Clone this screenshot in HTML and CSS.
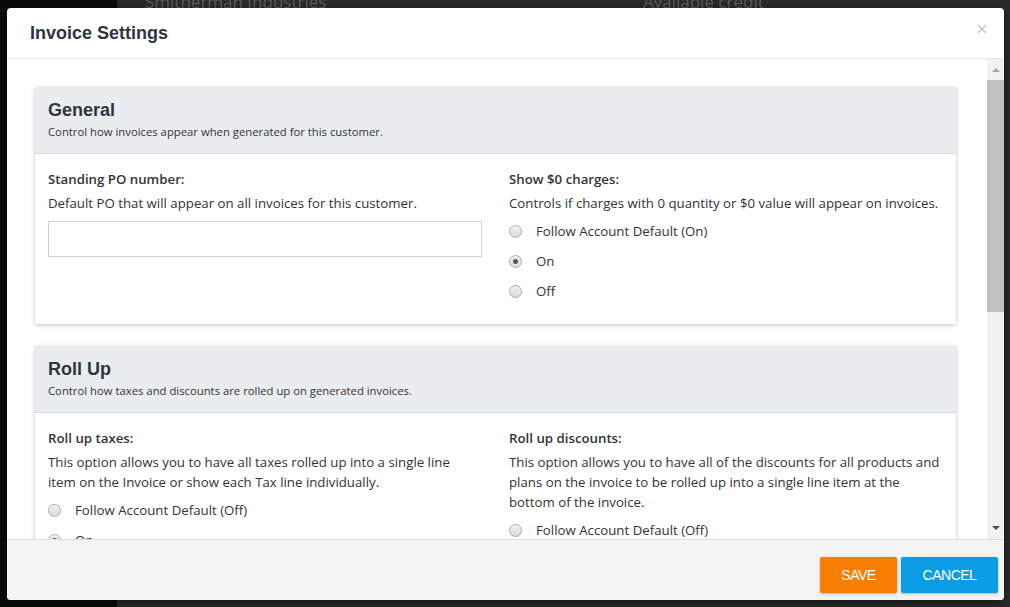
FILE: index.html
```html
<!DOCTYPE html>
<html lang="en">
<head>
    <meta charset="UTF-8">
    <meta name="viewport" content="width=device-width, initial-scale=1.0">
    <title>Invoice Settings</title>
    <link rel="stylesheet" href="styles.css">
</head>
<body>
    <div class="app">
        <aside class="sidebar"></aside>
        <main class="page">
            <div class="page-head">
                <span class="company">Smitherman Industries</span>
                <span class="credit">Available credit</span>
            </div>
        </main>
    </div>

    <div class="modal">
        <div class="modal-header">
            <h2>Invoice Settings</h2>
            <button class="close" aria-label="Close">
                <svg width="10" height="10" viewBox="0 0 10 10"><path d="M1 1L9 9M9 1L1 9" stroke="#c4c4c4" stroke-width="1.4"/></svg>
            </button>
        </div>

        <div class="modal-main">
            <div class="modal-body">
                <!-- General -->
                <section class="card">
                    <div class="card-header">
                        <h3>General</h3>
                        <p>Control how invoices appear when generated for this customer.</p>
                    </div>
                    <div class="card-body">
                        <div class="field">
                            <label class="field-label" for="poNumber">Standing PO number:</label>
                            <p class="help">Default PO that will appear on all invoices for this customer.</p>
                            <input type="text" id="poNumber">
                        </div>
                        <div class="field">
                            <label class="field-label">Show $0 charges:</label>
                            <p class="help">Controls if charges with 0 quantity or $0 value will appear on invoices.</p>
                            <label class="option"><input type="radio" name="zero"> Follow Account Default (On)</label>
                            <label class="option"><input type="radio" name="zero" checked> On</label>
                            <label class="option"><input type="radio" name="zero"> Off</label>
                        </div>
                    </div>
                </section>

                <!-- Roll Up -->
                <section class="card">
                    <div class="card-header">
                        <h3>Roll Up</h3>
                        <p>Control how taxes and discounts are rolled up on generated invoices.</p>
                    </div>
                    <div class="card-body">
                        <div class="field">
                            <label class="field-label">Roll up taxes:</label>
                            <p class="help">This option allows you to have all taxes rolled up into a single line<br>item on the Invoice or show each Tax line individually.</p>
                            <label class="option"><input type="radio" name="taxes"> Follow Account Default (Off)</label>
                            <label class="option"><input type="radio" name="taxes" checked> On</label>
                            <label class="option"><input type="radio" name="taxes"> Off</label>
                        </div>
                        <div class="field">
                            <label class="field-label">Roll up discounts:</label>
                            <p class="help">This option allows you to have all of the discounts for all products and<br>plans on the invoice to be rolled up into a single line item at the<br>bottom of the invoice.</p>
                            <label class="option"><input type="radio" name="discounts"> Follow Account Default (Off)</label>
                            <label class="option"><input type="radio" name="discounts"> On</label>
                            <label class="option"><input type="radio" name="discounts" checked> Off</label>
                        </div>
                    </div>
                </section>
            </div>

            <div class="scrollbar">
                <div class="sb-btn sb-up"><span class="arrow-up"></span></div>
                <div class="sb-thumb"></div>
                <div class="sb-track"></div>
                <div class="sb-btn sb-down"><span class="arrow-down"></span></div>
            </div>
        </div>

        <div class="modal-footer">
            <button class="btn btn-save">Save</button>
            <button class="btn btn-cancel">Cancel</button>
        </div>
    </div>
</body>
</html>
```

FILE: styles.css
```css
/* page behind the dialog */
body {
    margin: 0;
    width: 1010px;
    height: 607px;
    overflow: hidden;
    font-family: 'Open Sans', 'Noto Sans', sans-serif;
    font-size: 13.25px;
    color: #333;
}

.app {
    display: flex;
    height: 607px;
}

.sidebar {
    width: 117px;
    background-color: #0b0b0b;
}

.page {
    flex: 1;
    background-color: #2b2b2b;
}

.page-head {
    display: grid;
    grid-template-columns: 498px auto;
    margin-top: -9px;
    padding-left: 28px;
    font-size: 17px;
    line-height: 22px;
    color: #5e5e5e;
}

/* dialog */
.modal {
    position: absolute;
    left: 7px;
    top: 8px;
    width: 997px;
    height: 592px;
    display: flex;
    flex-direction: column;
    background-color: white;
    border-radius: 4px;
    overflow: hidden;
    box-shadow: 0 3px 12px rgba(0, 0, 0, 0.5);
}

.modal-header {
    height: 50px;
    display: flex;
    align-items: center;
    justify-content: space-between;
    padding: 0 16px 0 23px;
    border-bottom: 1px solid #e8e8e8;
}

.modal-header h2 {
    margin: 0;
    font-family: 'Liberation Sans', Arial, sans-serif;
    font-size: 18px;
    font-weight: bold;
    color: #2d3640;
}

.close {
    background: none;
    border: none;
    padding: 0;
    width: 12px;
    height: 12px;
    display: flex;
    align-items: center;
    justify-content: center;
    margin-top: -8px;
}

.modal-main {
    flex: 1;
    display: flex;
    min-height: 0;
}

.modal-body {
    flex: 1;
    overflow: hidden;
    padding: 28px 31px 0 28px;
}

/* fake windows scrollbar */
.scrollbar {
    width: 17px;
    display: flex;
    flex-direction: column;
    background-color: #f1f1f1;
}

.sb-btn {
    display: flex;
    align-items: center;
    justify-content: center;
}

.sb-up {
    height: 21px;
}

.sb-down {
    height: 22px;
}

.sb-thumb {
    height: 232px;
    background-color: #c1c1c1;
}

.sb-track {
    flex: 1;
}

.arrow-up {
    border-left: 4px solid transparent;
    border-right: 4px solid transparent;
    border-bottom: 4px solid #a3a3a3;
    margin-top: 1px;
}

.arrow-down {
    border-left: 4px solid transparent;
    border-right: 4px solid transparent;
    border-top: 4px solid #505050;
}

/* cards */
.card {
    background-color: white;
    box-shadow: 0 1px 4px rgba(0, 0, 0, 0.25);
    margin-bottom: 22px;
}

.card-header {
    background-color: #eaedf0;
    border-bottom: 1px solid #d3d9de;
    padding: 12px 13px 13px;
}

.card-header h3 {
    margin: 0;
    font-family: 'Liberation Sans', Arial, sans-serif;
    font-size: 18px;
    line-height: 22px;
    font-weight: bold;
    color: #2d3640;
}

.card-header p {
    margin: 3px 0 0;
    font-size: 11.3px;
    line-height: 16px;
    color: #333;
}

.card-body {
    display: grid;
    grid-template-columns: 1fr 1fr;
    gap: 27px;
    padding: 15px 13px 18px;
}

.field-label {
    display: block;
    font-weight: 600;
    line-height: 20px;
    margin-bottom: 4px;
    color: #333;
}

.help {
    margin: 0 0 3px;
    line-height: 20px;
}

input[type="text"] {
    display: block;
    width: 100%;
    height: 36px;
    margin-top: 8px;
    border: 1px solid #cbd3d9;
    box-sizing: border-box;
    font: inherit;
}

.option {
    display: flex;
    align-items: center;
    height: 30px;
    line-height: 20px;
}

.option input {
    appearance: none;
    -webkit-appearance: none;
    width: 13px;
    height: 13px;
    margin: 0 14px 0 0;
    border: 1px solid #ababab;
    border-radius: 50%;
    background: linear-gradient(#f0f0f0, #dcdcdc);
    box-sizing: border-box;
    position: relative;
}

.option input:checked::after {
    content: '';
    position: absolute;
    left: 3px;
    top: 3px;
    width: 5px;
    height: 5px;
    border-radius: 50%;
    background-color: #555;
}

/* footer */
.modal-footer {
    display: flex;
    justify-content: flex-end;
    align-items: flex-start;
    gap: 4px;
    padding: 17px 6px 0 0;
    box-sizing: border-box;
    height: 61px;
    background-color: #f4f4f4;
    border-top: 1px solid #dedede;
}

.btn {
    height: 36px;
    border: none;
    border-radius: 2px;
    color: white;
    font-family: 'Liberation Sans', Arial, sans-serif;
    font-size: 14px;
    letter-spacing: -0.5px;
    text-transform: uppercase;
    box-shadow: 0 1px 3px rgba(0, 0, 0, 0.25);
    cursor: pointer;
}

.btn-save {
    width: 77px;
    background-color: #f67e00;
}

.btn-cancel {
    width: 97px;
    background-color: #0c9ce3;
}
```
